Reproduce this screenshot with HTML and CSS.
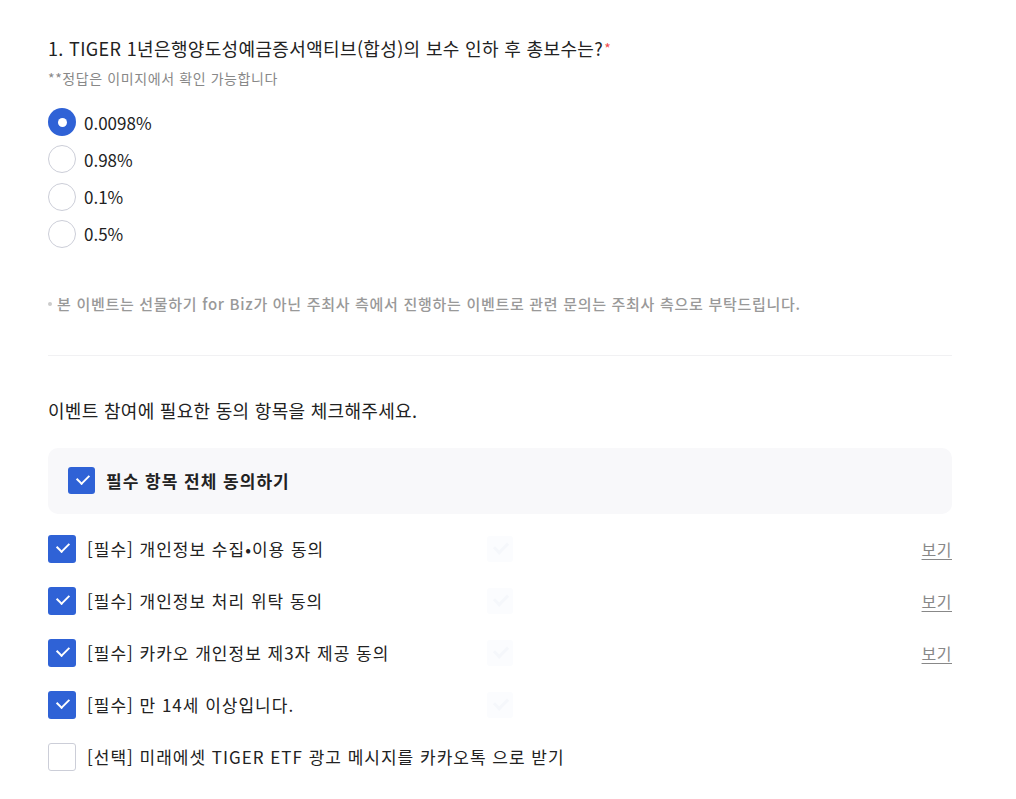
FILE: index.html
```html
<!DOCTYPE html>
<html lang="ko">
<head>
  <meta charset="UTF-8" />
  <meta name="viewport" content="width=device-width, initial-scale=1.0"/>
  <title>이벤트 참여</title>
  <link rel="stylesheet" href="styles.css">
</head>
<body>
  <div class="page">
    <!-- 퀴즈 문항 -->
    <section class="quiz">
      <h2 class="quiz-title">1. TIGER 1년은행양도성예금증서액티브(합성)의 보수 인하 후 총보수는?<span class="required">*</span></h2>
      <p class="quiz-hint">**정답은 이미지에서 확인 가능합니다</p>
      <ul class="options">
        <li class="option"><span class="radio checked"></span>0.0098%</li>
        <li class="option"><span class="radio"></span>0.98%</li>
        <li class="option"><span class="radio"></span>0.1%</li>
        <li class="option"><span class="radio"></span>0.5%</li>
      </ul>
      <p class="notice">본 이벤트는 선물하기 for Biz가 아닌 주최사 측에서 진행하는 이벤트로 관련 문의는 주최사 측으로 부탁드립니다.</p>
    </section>

    <!-- 동의 항목 -->
    <section class="agree">
      <h3 class="agree-title">이벤트 참여에 필요한 동의 항목을 체크해주세요.</h3>
      <div class="agree-all">
        <span class="check checked small"></span>
        <strong>필수 항목 전체 동의하기</strong>
      </div>
      <ul class="terms">
        <li class="term">
          <span class="check checked"></span>
          <span class="term-text">[필수] 개인정보 수집•이용 동의</span>
          <span class="ghost"></span>
          <a class="view" href="#">보기</a>
        </li>
        <li class="term">
          <span class="check checked"></span>
          <span class="term-text">[필수] 개인정보 처리 위탁 동의</span>
          <span class="ghost"></span>
          <a class="view" href="#">보기</a>
        </li>
        <li class="term">
          <span class="check checked"></span>
          <span class="term-text">[필수] 카카오 개인정보 제3자 제공 동의</span>
          <span class="ghost"></span>
          <a class="view" href="#">보기</a>
        </li>
        <li class="term">
          <span class="check checked"></span>
          <span class="term-text">[필수] 만 14세 이상입니다.</span>
          <span class="ghost"></span>
        </li>
        <li class="term">
          <span class="check"></span>
          <span class="term-text">[선택] 미래에셋 TIGER ETF 광고 메시지를 카카오톡 으로 받기</span>
        </li>
      </ul>
    </section>
  </div>
</body>
</html>
```

FILE: styles.css
```css
/* --- 기본 설정 --- */
body {
  margin: 0;
  background: #fff;
  color: #222;
  font-family: "Noto Sans CJK KR", "Noto Sans", sans-serif;
  -webkit-font-smoothing: antialiased;
}

.page {
  width: 904px;
  padding: 34px 48px 0;
}

ul {
  list-style: none;
  margin: 0;
  padding: 0;
}

/* --- 퀴즈 --- */
.quiz-title {
  font-size: 18px;
  font-weight: 400;
  line-height: 28px;
  margin: 0;
  letter-spacing: 0.35px;
}

.required {
  color: #f04d4d;
  font-size: 14px;
  vertical-align: top;
  margin-left: 1px;
}

.quiz-hint {
  font-size: 14px;
  color: #888;
  margin: 6px 0 0;
  line-height: 20px;
  letter-spacing: 0.6px;
}

.options {
  margin-top: 20px;
}

.option {
  display: flex;
  align-items: center;
  height: 28px;
  margin-bottom: 9.3px;
  font-size: 17px;
  gap: 8px;
}

.radio {
  width: 26px;
  height: 26px;
  border: 1px solid #ccced8;
  border-radius: 50%;
  box-sizing: content-box;
  flex-shrink: 0;
}

.radio.checked {
  width: 28px;
  height: 28px;
  border: none;
  background: #2f62d6;
  display: flex;
  align-items: center;
  justify-content: center;
}

.radio.checked::after {
  content: '';
  width: 9px;
  height: 9px;
  border-radius: 50%;
  background: #fff;
}

.notice {
  margin: 46px 0 0;
  padding-bottom: 41px;
  font-size: 15px;
  font-weight: 500;
  color: #999;
  line-height: 20px;
  letter-spacing: 0.7px;
  border-bottom: 1px solid #f1f1f3;
}

.notice::before {
  content: '';
  display: inline-block;
  width: 4px;
  height: 4px;
  border-radius: 50%;
  background: #ccc;
  vertical-align: middle;
  margin-right: 5px;
  position: relative;
  top: -2px;
}

/* --- 동의 --- */
.agree-title {
  font-size: 18px;
  font-weight: 400;
  margin: 42px 0 0;
  line-height: 24px;
  letter-spacing: 0.3px;
}

.agree-all {
  margin-top: 26px;
  height: 66px;
  background: #f8f8fa;
  border-radius: 10px;
  display: flex;
  align-items: center;
  padding: 0 20px;
  gap: 11px;
}

.agree-all strong {
  font-size: 17px;
  font-weight: 700;
  letter-spacing: 1px;
}

.check {
  width: 26px;
  height: 26px;
  border: 1px solid #ccced8;
  border-radius: 3px;
  flex-shrink: 0;
  box-sizing: content-box;
  position: relative;
}

.check.checked {
  width: 28px;
  height: 28px;
  border: none;
  background: #2f62d6;
}

.check.small {
  width: 27px;
  height: 27px;
}

.check.checked::after {
  content: '';
  position: absolute;
  left: 9px;
  top: 7px;
  width: 10px;
  height: 6px;
  border-left: 2.5px solid #fff;
  border-bottom: 2.5px solid #fff;
  transform: rotate(-45deg);
}

.terms {
  margin-top: 21px;
}

.term {
  display: flex;
  align-items: center;
  height: 28px;
  margin-bottom: 24px;
  font-size: 17px;
  position: relative;
}

.term-text {
  margin-left: 11px;
  letter-spacing: 1px;
}

/* 흐리게 보이는 체크 잔상 */
.ghost {
  position: absolute;
  left: 439px;
  top: 1px;
  width: 26px;
  height: 26px;
  border-radius: 3px;
  background: #fbfcfe;
}

.ghost::after {
  content: '';
  position: absolute;
  left: 7px;
  top: 6px;
  width: 11px;
  height: 6px;
  border-left: 3px solid #f5f7fb;
  border-bottom: 3px solid #f5f7fb;
  transform: rotate(-45deg);
}

.view {
  margin-left: auto;
  font-size: 16px;
  color: #888;
  letter-spacing: 0.5px;
  text-decoration: underline;
  text-underline-offset: 3px;
}
```
